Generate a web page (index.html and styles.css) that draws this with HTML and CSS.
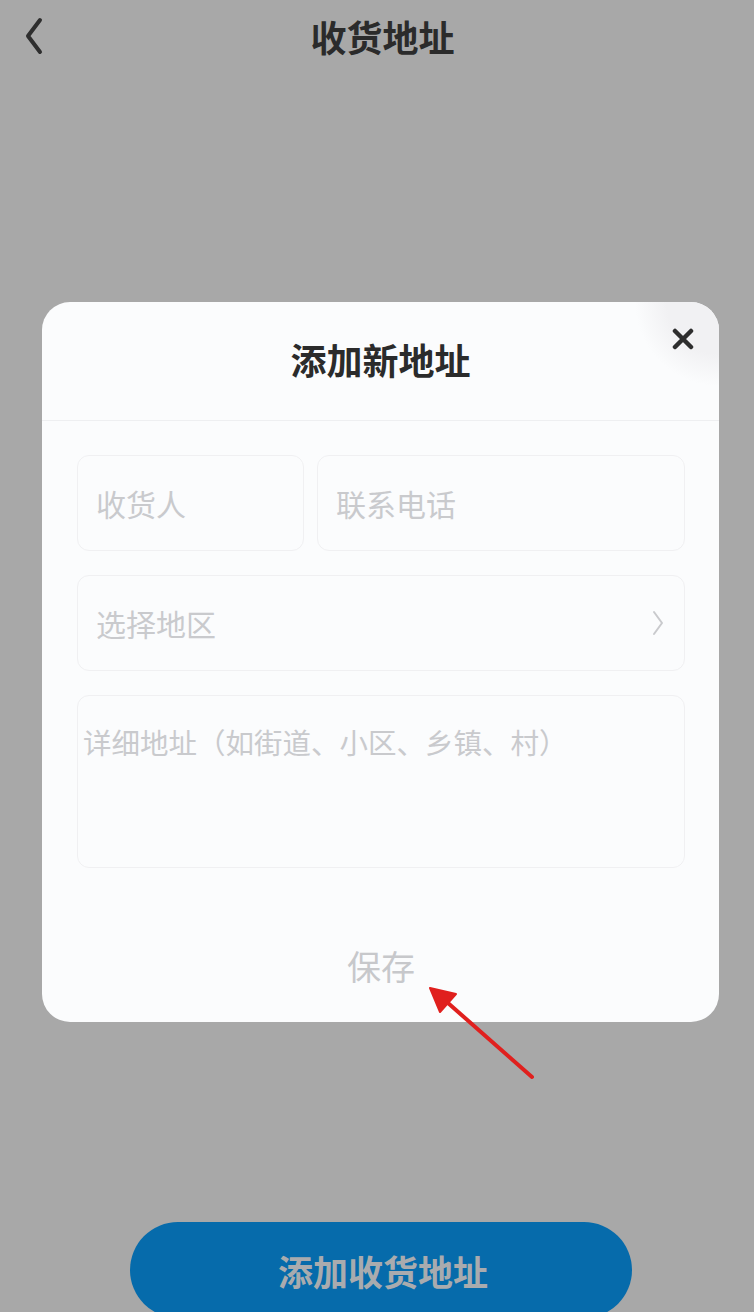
FILE: index.html
```html
<!DOCTYPE html>
<html lang="zh-CN">
<head>
<meta charset="utf-8">
<title>收货地址</title>
<link rel="stylesheet" href="styles.css">
</head>
<body>
<div class="page">
  <header class="topbar">
    <button class="back" aria-label="返回">
      <svg width="22" height="38" viewBox="0 0 22 38"><path d="M17 3 L5 19 L17 35" fill="none" stroke="#2e2e2e" stroke-width="4" stroke-linecap="round" stroke-linejoin="round"/></svg>
    </button>
    <h1 class="topbar-title">收货地址</h1>
    <span class="topbar-side"></span>
  </header>
  <main class="content"></main>
  <footer class="footer">
    <button class="add-btn">添加收货地址</button>
  </footer>

  <div class="modal">
    <div class="modal-corner"></div>
    <button class="close" aria-label="关闭">
      <svg width="22" height="22" viewBox="0 0 22 22"><path d="M3 3 L19 19 M19 3 L3 19" stroke="#2e2e2e" stroke-width="4.5" stroke-linecap="round"/></svg>
    </button>
    <div class="modal-head">添加新地址</div>
    <div class="modal-body">
      <div class="row-2">
        <div class="field"><span class="ph">收货人</span></div>
        <div class="field"><span class="ph">联系电话</span></div>
      </div>
      <div class="field field-select">
        <span class="ph">选择地区</span>
        <svg width="12" height="26" viewBox="0 0 12 26"><path d="M2 2 L10 13 L2 24" fill="none" stroke="#c9cacd" stroke-width="2" stroke-linecap="round" stroke-linejoin="round"/></svg>
      </div>
      <div class="field-area"><span class="ph ph-area">详细地址（如街道、小区、乡镇、村）</span></div>
      <div class="save">保存</div>
    </div>
  </div>

  <svg class="annot" width="754" height="1312" viewBox="0 0 754 1312">
    <line x1="532" y1="1077" x2="448" y2="1003" stroke="#e0201e" stroke-width="4" stroke-linecap="round"/>
    <polygon points="430,988 456,994 440,1012" fill="#e0201e" stroke="#e0201e" stroke-width="2" stroke-linejoin="round"/>
  </svg>
</div>
</body>
</html>
```

FILE: styles.css
```css
* { box-sizing: border-box; }
html, body {
  margin: 0;
  padding: 0;
  background: #a8a8a8;
  font-family: "Noto Sans CJK SC", "Noto Sans", sans-serif;
}
.page {
  position: relative;
  width: 754px;
  height: 1312px;
  overflow: hidden;
  display: flex;
  flex-direction: column;
}
.topbar {
  height: 76px;
  display: flex;
  align-items: center;
  justify-content: space-between;
  padding: 0 20px 4px 23px;
}
.back {
  width: 40px;
  height: 40px;
  border: 0;
  background: none;
  padding: 0;
  display: flex;
  align-items: center;
  justify-content: flex-start;
}
.topbar-side { width: 32px; }
.topbar-title {
  margin: 0;
  font-size: 36px;
  font-weight: 700;
  color: #2b2b2b;
  line-height: 1;
}
.content { flex: 1; }
.footer {
  display: flex;
  justify-content: center;
  margin-bottom: -6px;
}
.add-btn {
  width: 502px;
  height: 96px;
  margin-left: 8px;
  border: 0;
  border-radius: 48px;
  background: #066bab;
  color: #a9abae;
  font-family: inherit;
  font-size: 35px;
  font-weight: 700;
  padding: 0 0 0 4px;
}

.modal {
  position: absolute;
  left: 42px;
  top: 302px;
  width: 677px;
  height: 720px;
  background: #fbfcfd;
  border-radius: 28px;
  overflow: hidden;
}
.modal-corner {
  position: absolute;
  right: 0;
  top: 0;
  width: 110px;
  height: 110px;
  background: radial-gradient(circle at 100% 0, #f1f1f3 0, #f1f1f3 52px, rgba(241,241,243,0) 84px);
}
.close {
  position: absolute;
  right: 25px;
  top: 26px;
  width: 22px;
  height: 22px;
  padding: 0;
  border: 0;
  background: none;
  display: block;
}
.close svg { display: block; }
.modal-head {
  height: 119px;
  border-bottom: 1px solid #eeeff1;
  display: flex;
  align-items: center;
  justify-content: center;
  font-size: 36px;
  font-weight: 700;
  color: #2b2b2b;
  padding-bottom: 4px;
}
.modal-body {
  padding: 34px 34px 0 35px;
  display: flex;
  flex-direction: column;
  gap: 24px;
}
.row-2 {
  display: grid;
  grid-template-columns: 227px 1fr;
  gap: 13px;
}
.field {
  height: 96px;
  border: 1.5px solid #f0f0f2;
  border-radius: 12px;
  background: #fbfcfd;
  display: flex;
  align-items: center;
  padding: 0 18px;
}
.field-select {
  height: 96px;
  justify-content: space-between;
  padding-right: 20px;
}
.ph {
  font-size: 30px;
  color: #c9cacd;
  line-height: 1;
}
.field-area {
  height: 173px;
  border: 1.5px solid #f0f0f2;
  border-radius: 12px;
  padding: 26px 5px 0 5px;
}
.ph-area {
  font-size: 28.5px;
  line-height: 40px;
  display: block;
}
.save {
  margin-top: 46px;
  height: 56px;
  line-height: 56px;
  text-align: center;
  font-size: 34px;
  color: #c7c8cb;
}
.annot {
  position: absolute;
  left: 0;
  top: 0;
  pointer-events: none;
}
```
